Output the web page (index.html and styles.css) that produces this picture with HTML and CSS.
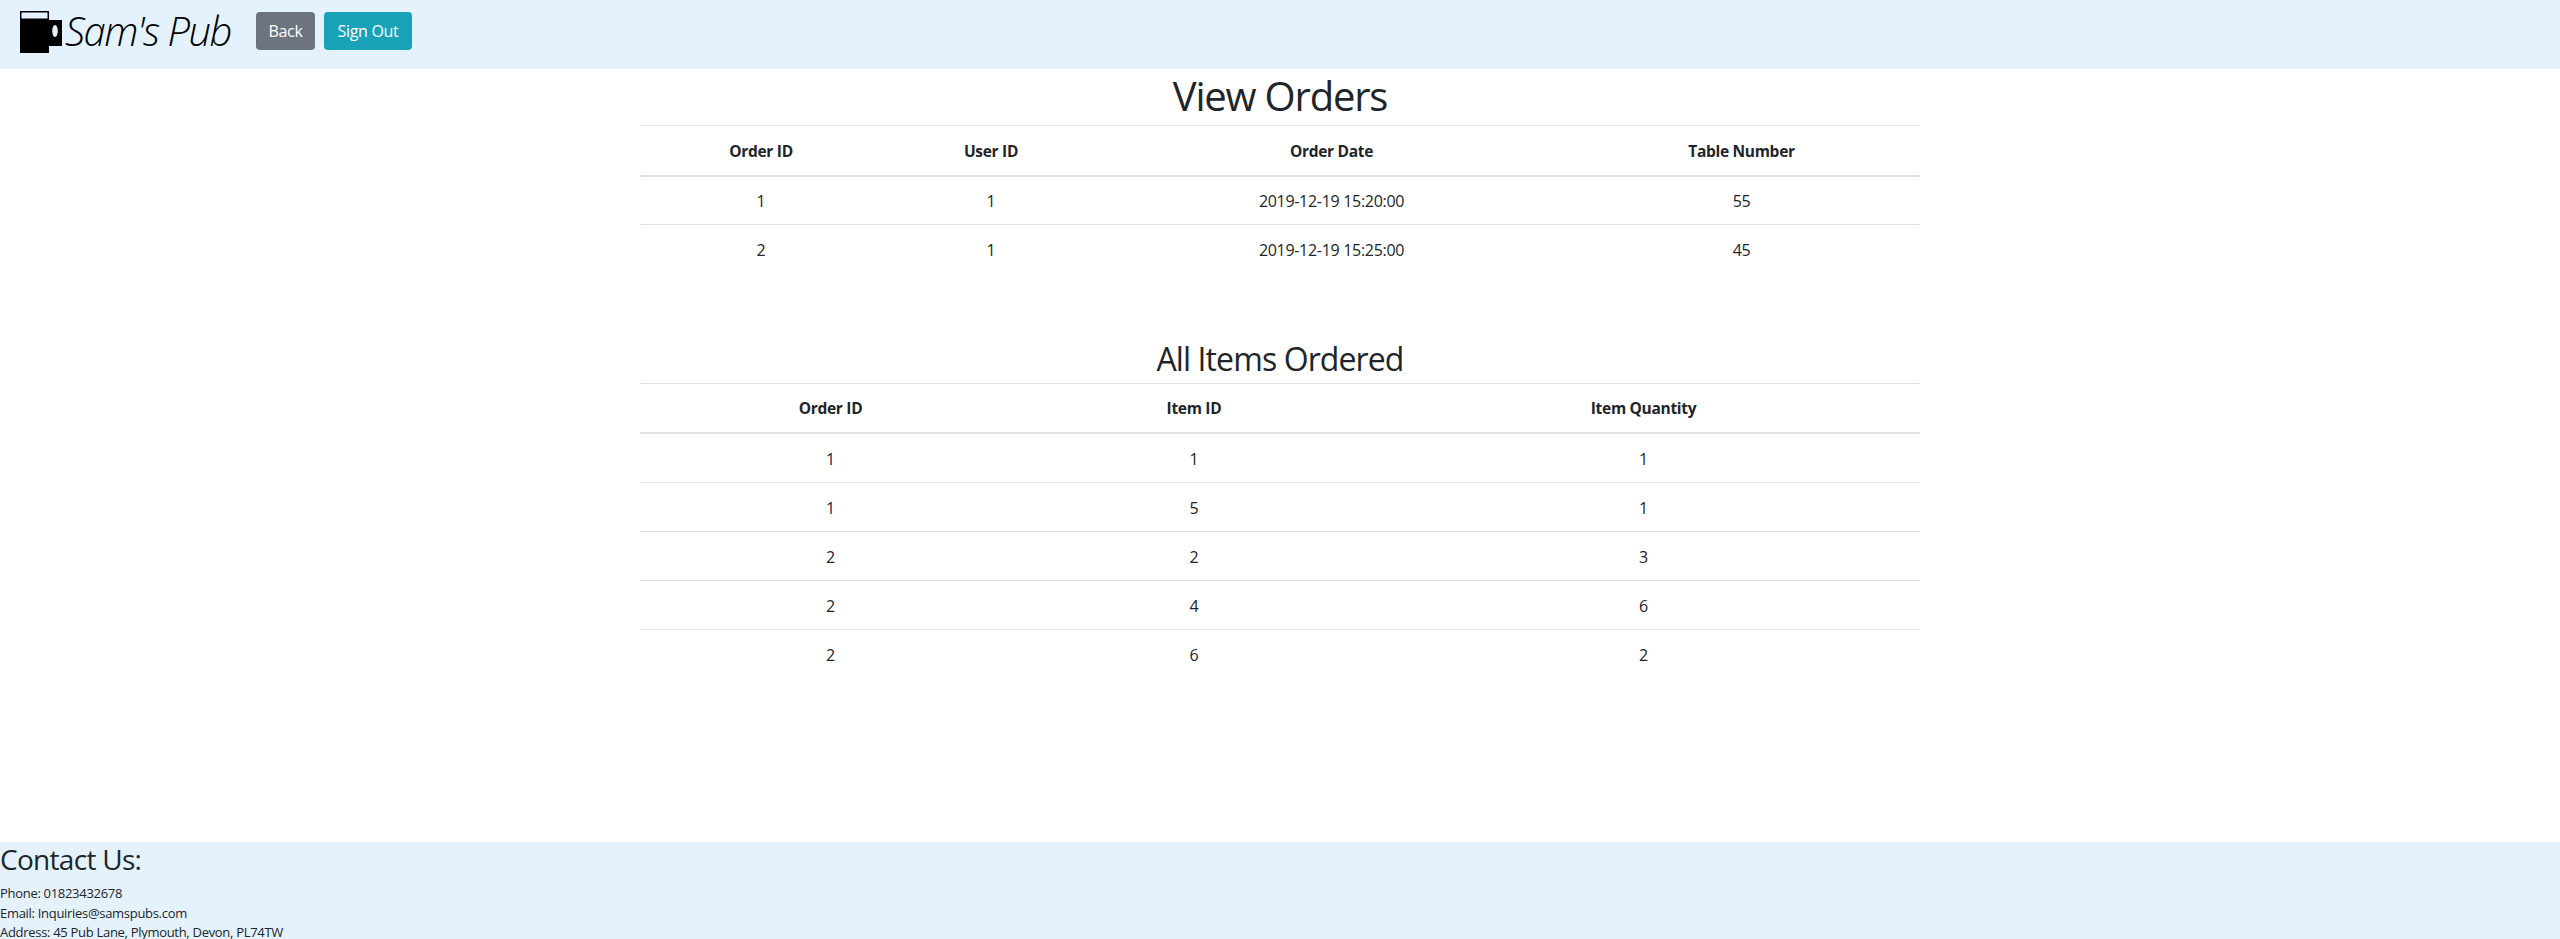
FILE: index.html
```html
<!DOCTYPE html>
<html lang="en">
<head>
<meta charset="utf-8">
<title>View Orders</title>
<link rel="stylesheet" href="styles.css">
</head>
<body>
<nav class="navbar">
  <a class="brand" href="#">
    <svg class="logo" viewBox="0 0 42 42" width="42" height="42" aria-hidden="true">
      <path fill="#000" d="M0 0H29V9H42V35H29V42H0Z"/>
      <rect x="1.500" y="1.500" width="26" height="6" fill="#e3f2fd"/>
      <ellipse cx="35" cy="20" rx="2.800" ry="6" fill="#e3f2fd"/>
    </svg>
    <span class="brand-name">Sam's Pub</span>
  </a>
  <a class="btn btn-grey" href="#">Back</a>
  <a class="btn btn-teal" href="#">Sign Out</a>
</nav>
<main class="content">
  <h1 class="title">View Orders</h1>
  <table class="grid orders">
    <colgroup><col class="o1"><col class="o2"><col class="o3"><col class="o4"></colgroup>
    <thead><tr><th>Order ID</th><th>User ID</th><th>Order Date</th><th>Table Number</th></tr></thead>
    <tbody>
      <tr><td>1</td><td>1</td><td>2019-12-19 15:20:00</td><td>55</td></tr>
      <tr><td>2</td><td>1</td><td>2019-12-19 15:25:00</td><td>45</td></tr>
    </tbody>
  </table>
  <h2 class="subtitle">All Items Ordered</h2>
  <table class="grid items">
    <colgroup><col class="i1"><col class="i2"><col class="i3"></colgroup>
    <thead><tr><th>Order ID</th><th>Item ID</th><th>Item Quantity</th></tr></thead>
    <tbody>
      <tr><td>1</td><td>1</td><td>1</td></tr>
      <tr><td>1</td><td>5</td><td>1</td></tr>
      <tr><td>2</td><td>2</td><td>3</td></tr>
      <tr><td>2</td><td>4</td><td>6</td></tr>
      <tr><td>2</td><td>6</td><td>2</td></tr>
    </tbody>
  </table>
</main>
<footer class="footer">
  <h3 class="contact">Contact Us:</h3>
  <p class="line">Phone: 01823432678</p>
  <p class="line">Email: Inquiries@samspubs.com</p>
  <p class="line">Address: 45 Pub Lane, Plymouth, Devon, PL74TW</p>
</footer>
</body>
</html>
```
FILE: styles.css
```css
* { box-sizing: border-box; }
html, body { margin: 0; padding: 0; height: 939px; overflow: hidden; }
body {
  font-family: "Open Sans", "Noto Sans", sans-serif;
  font-size: 16px;
  color: #212529;
  background: #fff;
  display: flex;
  flex-direction: column;
}
.navbar {
  height: 69px;
  flex: none;
  background: #e3f2fd;
  display: flex;
  align-items: flex-start;
  padding: 12px 0 0 20px;
}
.brand { display: flex; align-items: center; color: #000; text-decoration: none; margin-right: 24px; margin-top: -1px; height: 42px; }
.logo { display: block; }
.brand-name {
  font-size: 40px;
  font-weight: 300;
  font-style: italic;
  line-height: 50px;
  letter-spacing: -1.500px;
  margin-left: 3px;
  margin-top: -2px;
  width: 167px;
  white-space: nowrap;
}
.btn {
  height: 38px;
  display: flex;
  align-items: center;
  justify-content: center;
  border-radius: 4px;
  color: #fff;
  text-decoration: none;
  font-size: 16px;
  letter-spacing: -0.300px;
}
.btn-grey { width: 59px; background: #6c757d; margin-right: 9px; }
.btn-teal { width: 88px; background: #17a2b8; }
.content { width: 1280px; margin: 0 auto; flex: 1; }
.title {
  margin: 0;
  height: 56px;
  font-size: 40px;
  font-weight: 400;
  line-height: 54px;
  text-align: center;
  letter-spacing: -1.200px;
}
.subtitle {
  margin: 0;
  height: 48px;
  font-size: 32px;
  font-weight: 400;
  line-height: 48px;
  text-align: center;
  letter-spacing: -0.900px;
}
.grid { width: 1280px; border-collapse: collapse; table-layout: fixed; }
.grid th, .grid td {
  text-align: center;
  border-top: 1px solid #dee2e6;
  height: 49px;
  padding: 2px 0 0;
  vertical-align: middle;
  letter-spacing: -0.300px;
}
.grid th { font-weight: 700; font-size: 15.500px; height: 50px; border-bottom: 2px solid #dee2e6; padding: 1px 0 0; }
.orders { margin-bottom: 61px; }
.o1 { width: 242px; }
.o2 { width: 218px; }
.o3 { width: 463px; }
.o4 { width: 357px; }
.i1 { width: 381px; }
.i2 { width: 346px; }
.i3 { width: 553px; }
.footer {
  height: 97px;
  flex: none;
  background: #e3f2fd;
}
.contact {
  margin: 0;
  font-size: 28px;
  font-weight: 400;
  line-height: 35px;
  letter-spacing: -0.700px;
  height: 42px;
}
.line { margin: 0; font-size: 13px; line-height: 19.500px; letter-spacing: -0.300px; }
```
